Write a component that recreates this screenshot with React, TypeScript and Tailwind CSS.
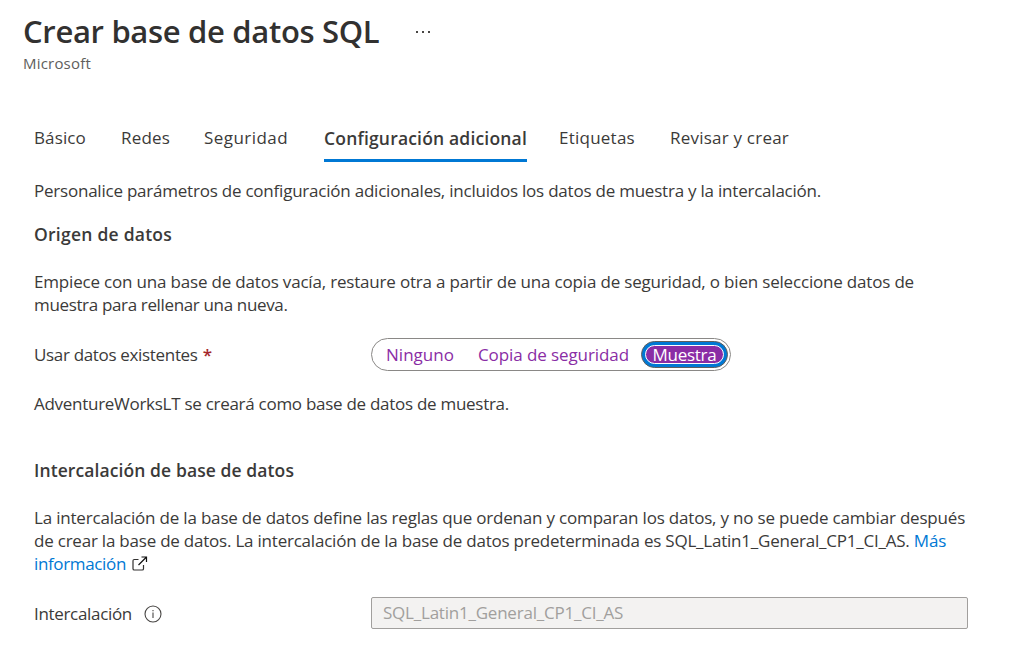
import React from "react";

type Tab = { label: string; className: string };

const tabs: Tab[] = [
  { label: "Básico", className: "w-[87px] tracking-[0.13px]" },
  { label: "Redes", className: "w-[83px] tracking-[0.18px]" },
  { label: "Seguridad", className: "w-[120px] tracking-[0.44px]" },
  { label: "Configuración adicional", className: "" },
  { label: "Etiquetas", className: "ml-8 w-[111px] tracking-[0.24px]" },
  { label: "Revisar y crear", className: "tracking-[0.22px]" },
];

function Tabs({ active }: { active: string }) {
  return (
    <nav className="mt-[52px] flex h-[37px] text-[17px] leading-6">
      {tabs.map((tab) =>
        tab.label === active ? (
          <button
            key={tab.label}
            className="h-9 w-[203px] border-b-3 border-[#0078d4] text-left text-[17.5px] font-semibold tracking-[0.178px]"
          >
            <span className="block h-[33px]">{tab.label}</span>
          </button>
        ) : (
          <button key={tab.label} className={`flex items-start text-left ${tab.className}`}>
            {tab.label}
          </button>
        ),
      )}
    </nav>
  );
}

function SourcePicker() {
  return (
    <div className="flex h-[33px] w-[360px] items-center rounded-full border border-[#8a8886] pl-[14px] text-[17px] leading-[23px] text-[#8a2da5]">
      <button className="w-[92px] text-left tracking-[0.029px]">Ninguno</button>
      <button className="w-[163px] text-left tracking-[-0.094px]">Copia de seguridad</button>
      <button className="flex h-[27px] w-[87px] items-center rounded-full border border-[#605e5c] bg-[#0078d4] p-[3px]">
        <span className="flex h-[19px] w-full items-center justify-center rounded-full border border-white bg-[#8a2da5] tracking-[-0.257px] text-white">
          Muestra
        </span>
      </button>
    </div>
  );
}

function ExternalIcon() {
  return (
    <svg className="ml-[6px] inline-block align-[-2px]" width="16" height="16" viewBox="0 0 16 16" fill="none" stroke="#323130" strokeWidth="1.2">
      <path d="M6.5 3.5H2.3Q1 3.5 1 4.8V12.7Q1 14 2.3 14H10.2Q11.5 14 11.5 12.7V9" />
      <path d="M6.5 9L14 1.5M9.5 1H14.5V6" stroke="#111111" />
    </svg>
  );
}

function InfoIcon() {
  return (
    <svg className="mt-[2px] ml-3" width="18" height="18" viewBox="0 0 18 18" fill="none" stroke="#484644">
      <circle cx="9" cy="9" r="8" strokeWidth="1.1" />
      <path d="M9 7.6V13M9 5V6.3" strokeWidth="1.1" />
    </svg>
  );
}

export default function App() {
  return (
    <main className="h-[672px] w-[1010px] overflow-hidden bg-white pt-[11px] font-normal whitespace-nowrap text-[#3b3a39] [font-family:'Open_Sans',sans-serif]">
      <header className="pl-[23px]">
        <div className="flex h-10 items-center">
          <h1 className="w-[392px] text-[31px] leading-10 font-semibold tracking-[-0.32px] text-[#323130]">
            Crear base de datos SQL
          </h1>
          <svg className="mt-[2px]" width="16" height="4" viewBox="0 0 16 4" fill="#484644">
            <rect x="1" y="1" width="2" height="2" />
            <rect x="7" y="1" width="2" height="2" />
            <rect x="13" y="1" width="2" height="2" />
          </svg>
        </div>
        <p className="mt-px h-[22px] text-[15px] leading-[22px] tracking-[0.2px] text-[#605e5c]">Microsoft</p>
      </header>

      <div className="pl-[34px] text-[17px] leading-[23px]">
        <Tabs active="Configuración adicional" />

        <p className="mt-4 tracking-[-0.223px]">
          Personalice parámetros de configuración adicionales, incluidos los datos de muestra y la intercalación.
        </p>

        <h2 className="mt-[21px] text-[17.5px] font-semibold tracking-[0.247px]">Origen de datos</h2>
        <p className="mt-6">
          <span className="tracking-[-0.185px]">
            Empiece con una base de datos vacía, restaure otra a partir de una copia de seguridad, o bien seleccione datos de
          </span>
          <br />
          <span className="tracking-[-0.35px]">muestra para rellenar una nueva.</span>
        </p>

        <div className="mt-[22px] flex items-center">
          <span className="w-[337px] tracking-[-0.33px]">
            Usar datos existentes{" "}
            <span className="ml-px font-semibold text-[#a4262c]">*</span>
          </span>
          <SourcePicker />
        </div>

        <p className="mt-[21px] tracking-[-0.279px]">AdventureWorksLT se creará como base de datos de muestra.</p>

        <h2 className="mt-11 text-[17.5px] font-semibold tracking-[0.093px]">Intercalación de base de datos</h2>
        <p className="mt-6">
          <span className="tracking-[-0.193px]">
            La intercalación de la base de datos define las reglas que ordenan y comparan los datos, y no se puede cambiar después
          </span>
          <br />
          <span className="tracking-[-0.219px]">
            de crear la base de datos. La intercalación de la base de datos predeterminada es SQL_Latin1_General_CP1_CI_AS.{" "}
            <a className="text-[#0078d4]">Más</a>
          </span>
          <br />
          <a className="tracking-[-0.355px] text-[#0078d4]">información</a>
          <ExternalIcon />
        </p>

        <div className="mt-[22px] flex items-center">
          <label className="flex w-[337px] items-center tracking-[-0.323px]">
            Intercalación
            <InfoIcon />
          </label>
          <div className="h-8 w-[597px] rounded-xs border border-[#a19f9d] bg-[#f3f2f1] pl-[11px] leading-[29px] tracking-[-0.221px] text-[#a19f9d]">
            SQL_Latin1_General_CP1_CI_AS
          </div>
        </div>
      </div>
    </main>
  );
}
